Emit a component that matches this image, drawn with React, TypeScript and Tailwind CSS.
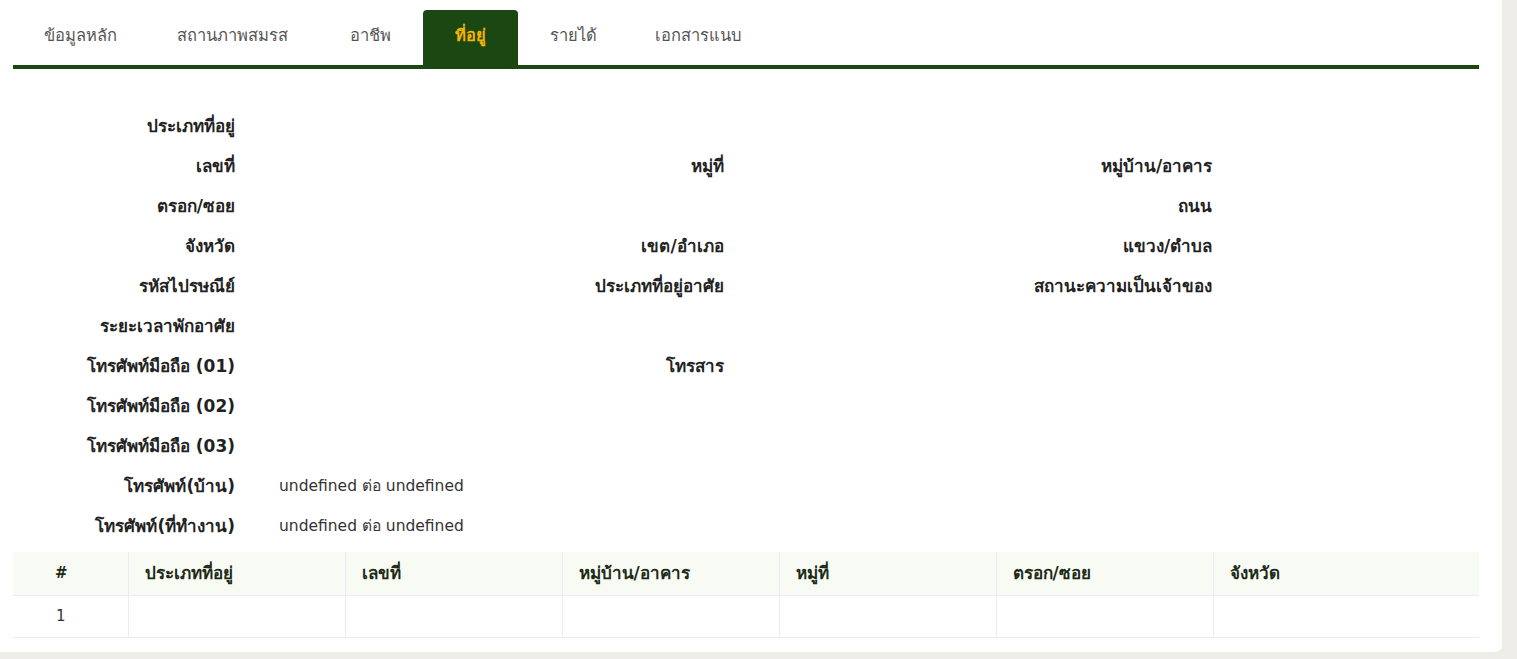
import React from "react";

const tabs = ["ข้อมูลหลัก", "สถานภาพสมรส", "อาชีพ", "ที่อยู่", "รายได้", "เอกสารแนบ"];

type Cell = { label: string; value?: string } | null;

const rows: Cell[][] = [
  [{ label: "ประเภทที่อยู่" }, null, null],
  [{ label: "เลขที่" }, { label: "หมู่ที่" }, { label: "หมู่บ้าน/อาคาร" }],
  [{ label: "ตรอก/ซอย" }, null, { label: "ถนน" }],
  [{ label: "จังหวัด" }, { label: "เขต/อำเภอ" }, { label: "แขวง/ตำบล" }],
  [{ label: "รหัสไปรษณีย์" }, { label: "ประเภทที่อยู่อาศัย" }, { label: "สถานะความเป็นเจ้าของ" }],
  [{ label: "ระยะเวลาพักอาศัย" }, null, null],
  [{ label: "โทรศัพท์มือถือ (01)" }, { label: "โทรสาร" }, null],
  [{ label: "โทรศัพท์มือถือ (02)" }, null, null],
  [{ label: "โทรศัพท์มือถือ (03)" }, null, null],
  [{ label: "โทรศัพท์(บ้าน)", value: "undefined ต่อ undefined" }, null, null],
  [{ label: "โทรศัพท์(ที่ทำงาน)", value: "undefined ต่อ undefined" }, null, null],
];

const headers = ["#", "ประเภทที่อยู่", "เลขที่", "หมู่บ้าน/อาคาร", "หมู่ที่", "ตรอก/ซอย", "จังหวัด"];

export default function App() {
  return (
    <div
      className="w-[1517px] h-[659px] bg-[#efede8] overflow-hidden"
      style={{ fontFamily: "Tahoma, 'DejaVu Sans', 'Noto Sans', sans-serif" }}
    >
      <div className="w-[1502px] h-[652px] bg-white rounded-br-[7px] pl-[13px] pr-[23px] pt-[10px]">
        {/* Tabs */}
        <div className="flex items-end border-b-4 border-[#1a4712] h-[59px]">
          {tabs.map((t, i) => {
            const active = i === 3;
            const widths = ["w-[134px]", "w-[170px]", "w-[106px]", "w-[95px]", "w-[110px]", "w-[140px]"];
            return (
              <div
                key={t}
                className={`${widths[i]} h-[55px] flex items-center justify-center text-[16.5px] pb-[2px] ${
                  active ? "bg-[#1a4712] text-[#f5b400] font-bold rounded-t-[4px]" : "text-[#555]"
                }`}
              >
                {t}
              </div>
            );
          })}
        </div>

        {/* Form */}
        <div className="pt-[38px] flex flex-col">
          {rows.map((r, ri) => (
            <div key={ri} className="grid grid-cols-3 h-[40px] items-center">
              {r.map((c, ci) => (
                <div key={ci} className="flex items-center">
                  <div className="w-[222px] shrink-0 text-right font-bold text-[17px] text-[#222]">{c ? c.label : ""}</div>
                  <div className="pl-[44px] text-[15.5px] text-[#333]">{c && c.value ? c.value : ""}</div>
                </div>
              ))}
            </div>
          ))}
        </div>

        {/* Table */}
        <table className="mt-[5px] w-[1466px] border-collapse text-[17px]">
          <colgroup>
            <col className="w-[115px]" />
            <col className="w-[217px]" />
            <col className="w-[217px]" />
            <col className="w-[217px]" />
            <col className="w-[217px]" />
            <col className="w-[217px]" />
            <col />
          </colgroup>
          <thead>
            <tr className="bg-[#f7fbf3] h-[43px]">
              {headers.map((h, i) => (
                <th
                  key={h}
                  className={`font-bold text-[#1e2a18] border-b border-[#e8ecf5] text-left ${
                    i < headers.length - 1 ? "border-r" : ""
                  } ${i === 0 ? "text-[15px] pl-[42px]" : "pl-[16px]"}`}
                >
                  {h}
                </th>
              ))}
            </tr>
          </thead>
          <tbody>
            <tr className="h-[42px]">
              {headers.map((h, i) => (
                <td
                  key={h}
                  className={`text-[#333] text-[15px] border-b border-[#e8ecf5] ${
                    i < headers.length - 1 ? "border-r" : ""
                  } ${i === 0 ? "pl-[43px]" : ""}`}
                >
                  {i === 0 ? "1" : ""}
                </td>
              ))}
            </tr>
          </tbody>
        </table>
      </div>
    </div>
  );
}
